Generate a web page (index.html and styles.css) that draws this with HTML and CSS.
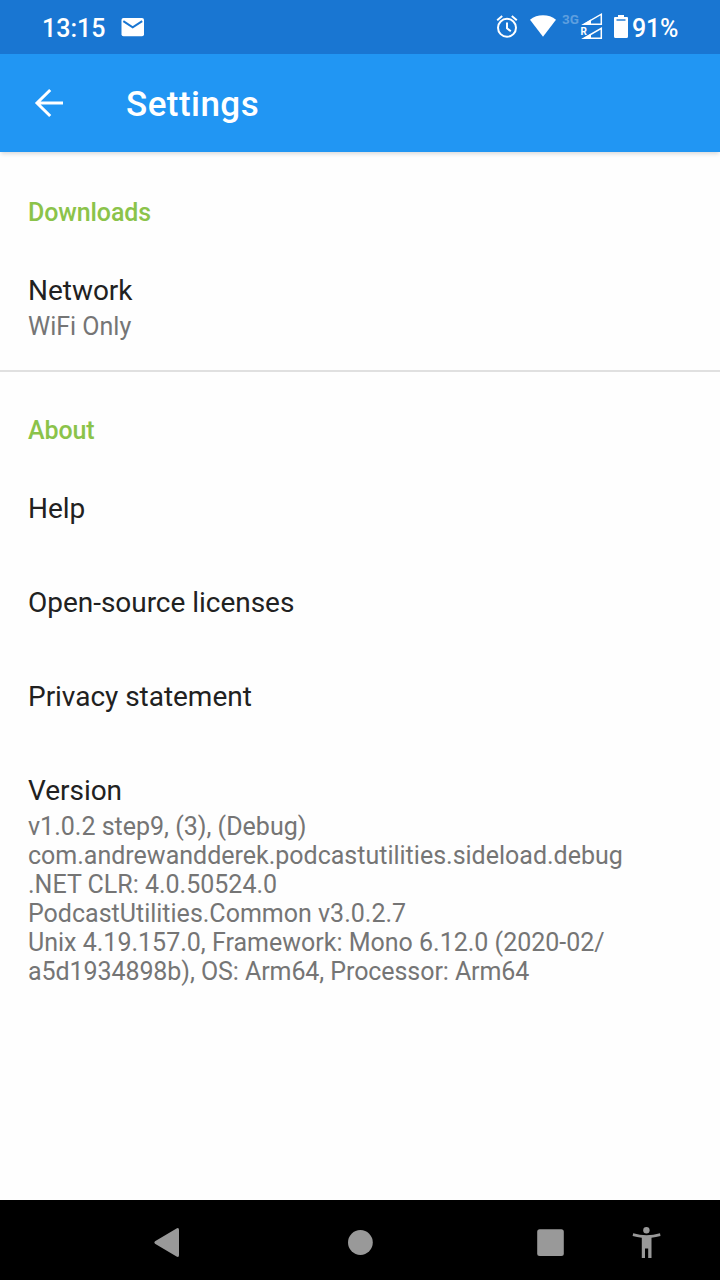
FILE: index.html
```html
<!DOCTYPE html>
<html lang="en">
<head>
<meta charset="utf-8">
<title>Settings</title>
<link rel="stylesheet" href="styles.css">
</head>
<body>
<div class="screen">
  <div class="status">
    <span class="clock">13:15</span>
    <svg class="mail" width="24" height="20" viewBox="0 0 24 20"><rect x=".5" y="1" width="22.5" height="18.2" rx="2" fill="#fff"/><path d="M2.3 4.2 11.7 10.3 21.2 4.2" fill="none" stroke="#1976d2" stroke-width="2"/></svg>
    <svg class="signals" width="134" height="32" viewBox="496 11 134 32">
      <g fill="none" stroke="#fff" stroke-width="2">
        <circle cx="507" cy="27.8" r="9"/>
        <path d="M507 22.5v5.8l3.800 3M497.200 20.300l5-4.200M516.800 20.300l-5-4.200"/>
      </g>
      <path d="M530 19.700C537 13.800 549 13.800 556 19.700L543 36.700Z" fill="#fff"/>
      <text class="network" x="562" y="24">3G</text>
      <g fill="none" stroke="#fff" stroke-width="1.500">
        <path d="M584 24.200H601.300V14.200Z"/>
        <path d="M584 38.300H601.300V28.400Z"/>
      </g>
      <path d="M582 25 591 19.600V25ZM582 39 591 33.800V39Z" fill="#fff"/>
      <rect x="580" y="26" width="7.500" height="9" fill="#1976d2"/>
      <text class="roaming" x="580.400" y="34.500">R</text>
      <path d="M618 15h6v2h3q1 0 1 1V36.500q0 1.500-1.500 1.500h-11q-1.500 0-1.500-1.500V18q0-1 1-1h3Z" fill="#fff"/>
      <path d="M616.500 20h9" stroke="#1976d2" stroke-width="1.400"/>
    </svg>
    <span class="battery">91%</span>
  </div>
  <header class="appbar">
    <svg class="back" width="30" height="30" viewBox="0 0 30 30"><path d="M29 15H3M16.200 2 3 15 16.200 28" fill="none" stroke="#fff" stroke-width="3"/></svg>
    <h1 class="title">Settings</h1>
  </header>
  <main class="content">
    <section class="group">
      <h2 class="category">Downloads</h2>
      <div class="item"><div class="name">Network</div><div class="summary">WiFi Only</div></div>
    </section>
    <section class="group">
      <h2 class="category">About</h2>
      <div class="item"><div class="name">Help</div></div>
      <div class="item"><div class="name">Open-source licenses</div></div>
      <div class="item"><div class="name">Privacy statement</div></div>
      <div class="item"><div class="name">Version</div><div class="summary">v1.0.2 step9, (3), (Debug)<br>com.andrewandderek.podcastutilities.sideload.debug<br>.NET CLR: 4.0.50524.0<br>PodcastUtilities.Common v3.0.2.7<br>Unix 4.19.157.0, Framework: Mono 6.12.0 (2020-02/<br><span class="tight">a5d1934898b), OS: Arm64, Processor: Arm64</span></div></div>
    </section>
  </main>
  <nav class="navbar">
    <svg width="720" height="80" viewBox="0 1200 720 80" fill="#999">
      <path d="M155 1241.300 176.500 1228.400Q179 1227.200 179 1230V1255Q179 1257.800 176.500 1256.600L155 1243.700Q153.600 1242.500 155 1241.300Z"/>
      <circle cx="360.400" cy="1242.500" r="12.400"/>
      <rect x="537.200" y="1229.300" width="26.600" height="26.600" rx="2.500"/>
      <circle cx="646.400" cy="1230.200" r="3.200"/>
      <path d="M633.200 1233.200Q646.500 1237.400 660 1233.200L660.500 1236Q656 1237.300 651.500 1237.700V1258H648.200V1248.500H645V1258H641.800V1237.700Q637 1237.300 632.600 1236Z"/>
    </svg>
  </nav>
</div>
</body>
</html>
```
FILE: styles.css
```css
body {
  margin: 0;
  font-family: Roboto, sans-serif;
}
.screen {
  display: flex;
  flex-direction: column;
  width: 720px;
  height: 1280px;
  background: #fefefe;
}
.status {
  display: flex;
  align-items: center;
  box-sizing: border-box;
  height: 54px;
  padding: 0 0 0 42px;
  background: #1976d2;
  color: #fff;
  font-size: 25px;
  font-weight: 500;
}
.clock {
  width: 79px;
  padding-top: 3px;
}
.signals {
  margin-left: 351px;
}
.battery {
  padding: 3px 0 0 2px;
  letter-spacing: -.2px;
}
.network {
  font-size: 13.5px;
  font-weight: 700;
  fill: #5e9fdf;
}
.roaming {
  font-size: 10px;
  font-weight: 700;
  fill: #fff;
}
.appbar {
  display: flex;
  align-items: center;
  height: 98px;
  padding-left: 34px;
  background: #2196f3;
  color: #fff;
  box-shadow: 0 3px 4px -1px rgba(0, 0, 0, .14);
}
.title {
  margin: 2px 0 0 62px;
  font-size: 35px;
  font-weight: 500;
  letter-spacing: .45px;
}
.content {
  flex: 1;
}
.category {
  margin: 0;
  padding: 46px 28px 16px;
  color: #8bc34a;
  font-size: 25px;
  font-weight: 500;
  letter-spacing: -.1px;
  line-height: 29px;
}
.group + .group {
  border-top: 2px solid #e0e0e0;
}
.group + .group .category {
  padding: 44px 28px 16px;
}
.item {
  padding: 31px 28px 29px;
}
.name {
  color: #212121;
  font-size: 28px;
  letter-spacing: -.03px;
  line-height: 34px;
}
.summary {
  margin-top: 4px;
  color: #757575;
  font-size: 25px;
  line-height: 29px;
}
.tight {
  letter-spacing: -.075px;
}
.navbar {
  height: 80px;
  background: #000;
}
.navbar svg {
  display: block;
}
```
